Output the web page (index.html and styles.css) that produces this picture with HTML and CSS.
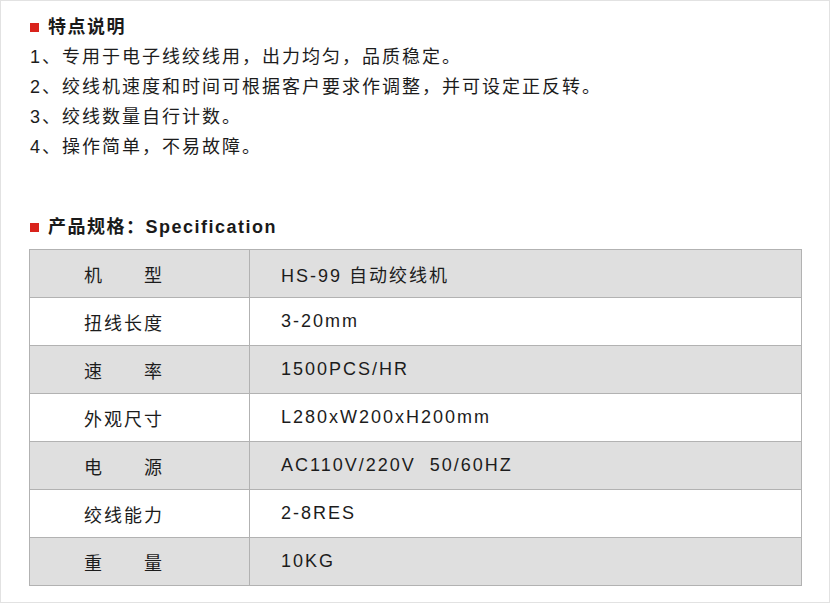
FILE: index.html
```html
<!DOCTYPE html>
<html lang="zh-CN">
<head>
<meta charset="utf-8">
<link rel="stylesheet" href="styles.css">
</head>
<body>
<div class="frame">
  <h2 class="title"><span class="mark"></span>特点说明</h2>
  <ul class="features">
    <li>1、专用于电子线绞线用，出力均匀，品质稳定。</li>
    <li>2、绞线机速度和时间可根据客户要求作调整，并可设定正反转。</li>
    <li>3、绞线数量自行计数。</li>
    <li>4、操作简单，不易故障。</li>
  </ul>
  <h2 class="title title-spec"><span class="mark"></span>产品规格：Specification</h2>
  <table class="spec">
    <tr class="alt"><td class="k">机　　型</td><td class="v">HS-99 自动绞线机</td></tr>
    <tr><td class="k">扭线长度</td><td class="v">3-20mm</td></tr>
    <tr class="alt"><td class="k">速　　率</td><td class="v">1500PCS/HR</td></tr>
    <tr><td class="k">外观尺寸</td><td class="v">L280xW200xH200mm</td></tr>
    <tr class="alt"><td class="k">电　　源</td><td class="v">AC110V/220V&nbsp; 50/60HZ</td></tr>
    <tr><td class="k">绞线能力</td><td class="v">2-8RES</td></tr>
    <tr class="alt"><td class="k">重　　量</td><td class="v">10KG</td></tr>
  </table>
</div>
</body>
</html>
```

FILE: styles.css
```css
html, body {
  margin: 0;
  padding: 0;
  background: #fff;
}
body {
  font-family: "Liberation Sans", "Noto Sans CJK SC", sans-serif;
  color: #1c1c1c;
}
.frame {
  width: 830px;
  height: 603px;
  box-sizing: border-box;
  border: 1px solid #e2e2e2;
  padding: 11px 0 0 28px;
}
.title {
  margin: 0;
  height: 30px;
  line-height: 30px;
  font-size: 18px;
  font-weight: bold;
  letter-spacing: 1.5px;
  display: flex;
  align-items: center;
  color: #1a1a1a;
}
.mark {
  width: 9px;
  height: 9px;
  background: #d9231c;
  margin: 0 9px 0 1px;
  flex: none;
}
.features {
  list-style: none;
  margin: 0;
  padding: 0 0 0 1px;
  font-size: 18px;
  line-height: 30px;
  letter-spacing: 2px;
}
.title-spec {
  margin-top: 50px;
}
.spec {
  margin-top: 7px;
  width: 773px;
  border-collapse: collapse;
  font-size: 18px;
  letter-spacing: 2px;
}
.spec td {
  height: 47px;
  padding: 0;
  border: 1px solid #b2b2b2;
  vertical-align: middle;
}
.spec tr.alt td {
  background: #dfdfdf;
}
.spec td.k {
  width: 165px;
  padding-left: 54px;
}
.spec td.v {
  padding-left: 31px;
}
```
